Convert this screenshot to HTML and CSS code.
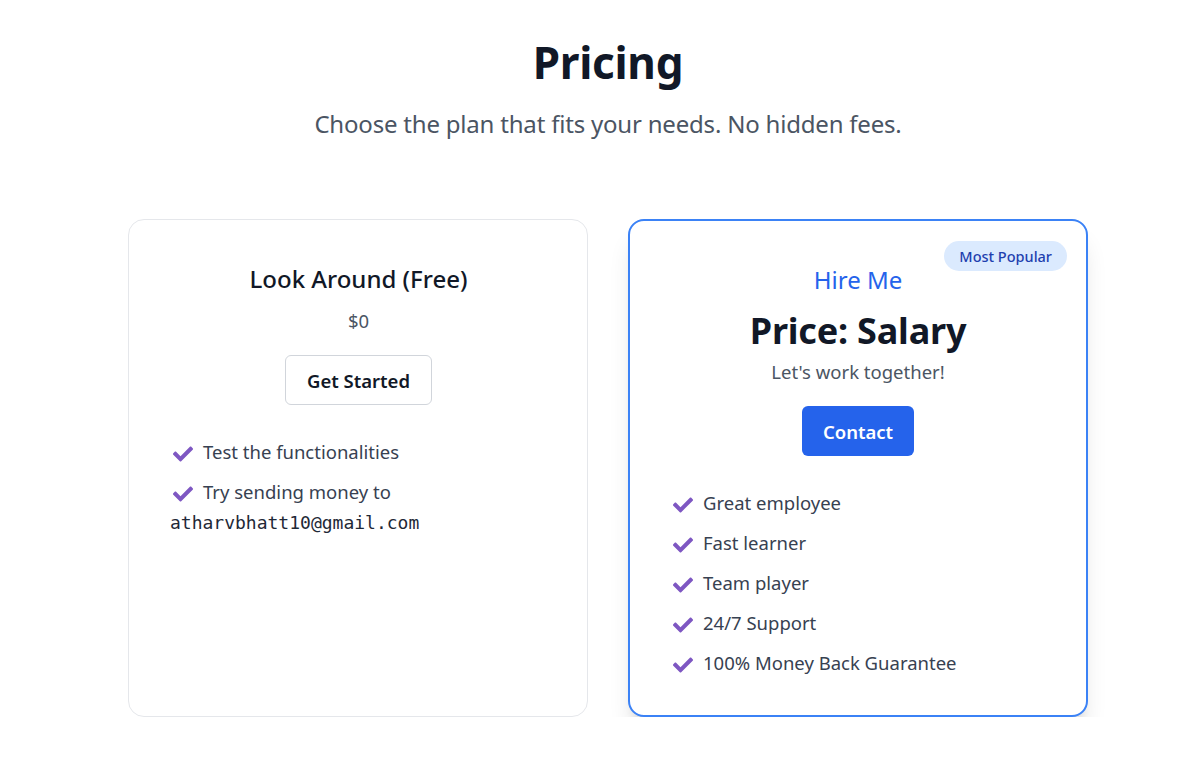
FILE: index.html
```html
<!DOCTYPE html>
<html lang="en">
<head>
<meta charset="utf-8">
<title>Pricing</title>
<link rel="stylesheet" href="styles.css">
</head>
<body>
<main class="page">
  <header class="intro">
    <h1 class="title">Pricing</h1>
    <p class="subtitle">Choose the plan that fits your needs. No hidden fees.</p>
  </header>
  <section class="plans">
    <article class="card">
      <h2 class="plan-name">Look Around (Free)</h2>
      <p class="plan-price">$0</p>
      <button class="btn btn-outline">Get Started</button>
      <ul class="features">
        <li><svg class="check" viewBox="0 0 512 400"><path d="M173.9 383.4l-166.4-166.4c-10-10-10-26.2 0-36.2l36.2-36.2c10-10 26.2-10 36.2 0L192 256.7 432.1 16.6c10-10 26.2-10 36.2 0l36.2 36.2c10 10 10 26.2 0 36.2l-294.4 294.4c-10 10-26.2 10-36.2 0z"/></svg>Test the functionalities</li>
        <li><svg class="check" viewBox="0 0 512 400"><path d="M173.9 383.4l-166.4-166.4c-10-10-10-26.2 0-36.2l36.2-36.2c10-10 26.2-10 36.2 0L192 256.7 432.1 16.6c10-10 26.2-10 36.2 0l36.2 36.2c10 10 10 26.2 0 36.2l-294.4 294.4c-10 10-26.2 10-36.2 0z"/></svg>Try sending money to <code class="email">atharvbhatt10@gmail.com</code></li>
      </ul>
    </article>
    <article class="card card-featured">
      <span class="badge">Most Popular</span>
      <h2 class="plan-name plan-name-blue">Hire Me</h2>
      <p class="plan-big">Price: Salary</p>
      <p class="plan-note">Let's work together!</p>
      <button class="btn btn-primary">Contact</button>
      <ul class="features">
        <li><svg class="check" viewBox="0 0 512 400"><path d="M173.9 383.4l-166.4-166.4c-10-10-10-26.2 0-36.2l36.2-36.2c10-10 26.2-10 36.2 0L192 256.7 432.1 16.6c10-10 26.2-10 36.2 0l36.2 36.2c10 10 10 26.2 0 36.2l-294.4 294.4c-10 10-26.2 10-36.2 0z"/></svg>Great employee</li>
        <li><svg class="check" viewBox="0 0 512 400"><path d="M173.9 383.4l-166.4-166.4c-10-10-10-26.2 0-36.2l36.2-36.2c10-10 26.2-10 36.2 0L192 256.7 432.1 16.6c10-10 26.2-10 36.2 0l36.2 36.2c10 10 10 26.2 0 36.2l-294.4 294.4c-10 10-26.2 10-36.2 0z"/></svg>Fast learner</li>
        <li><svg class="check" viewBox="0 0 512 400"><path d="M173.9 383.4l-166.4-166.4c-10-10-10-26.2 0-36.2l36.2-36.2c10-10 26.2-10 36.2 0L192 256.7 432.1 16.6c10-10 26.2-10 36.2 0l36.2 36.2c10 10 10 26.2 0 36.2l-294.4 294.4c-10 10-26.2 10-36.2 0z"/></svg>Team player</li>
        <li><svg class="check" viewBox="0 0 512 400"><path d="M173.9 383.4l-166.4-166.4c-10-10-10-26.2 0-36.2l36.2-36.2c10-10 26.2-10 36.2 0L192 256.7 432.1 16.6c10-10 26.2-10 36.2 0l36.2 36.2c10 10 10 26.2 0 36.2l-294.4 294.4c-10 10-26.2 10-36.2 0z"/></svg>24/7 Support</li>
        <li><svg class="check" viewBox="0 0 512 400"><path d="M173.9 383.4l-166.4-166.4c-10-10-10-26.2 0-36.2l36.2-36.2c10-10 26.2-10 36.2 0L192 256.7 432.1 16.6c10-10 26.2-10 36.2 0l36.2 36.2c10 10 10 26.2 0 36.2l-294.4 294.4c-10 10-26.2 10-36.2 0z"/></svg>100% Money Back Guarantee</li>
      </ul>
    </article>
  </section>
</main>
</body>
</html>
```

FILE: styles.css
```css
* { box-sizing: border-box; }

html, body {
  margin: 0;
  padding: 0;
  background: #ffffff;
}

body {
  font-family: "Noto Sans", "Open Sans", sans-serif;
  color: #111827;
}

.page {
  padding: 34px 0 0 24px;
  display: flex;
  flex-direction: column;
  align-items: center;
}

.intro {
  text-align: center;
}

.title {
  margin: 0;
  font-size: 44px;
  line-height: 56px;
  font-weight: 700;
  color: #111827;
  letter-spacing: -0.3px;
}

.subtitle {
  margin: 18px 0 0;
  font-size: 24px;
  line-height: 32px;
  color: #4b5563;
  letter-spacing: -0.2px;
}

.plans {
  margin-top: 79px;
  display: grid;
  grid-template-columns: 460px 460px;
  gap: 40px;
}

.card {
  position: relative;
  height: 498px;
  border: 1px solid #e5e7eb;
  border-radius: 16px;
  background: #fff;
  padding: 43px 40px 16px 41px;
  display: flex;
  flex-direction: column;
  align-items: center;
}

.card > * { flex-shrink: 0; }

.card-featured {
  border: 2px solid #3b82f6;
  padding: 43px 40px 16px 40px;
  box-shadow: 0 20px 25px -5px rgba(0,0,0,0.12), 0 8px 10px -6px rgba(0,0,0,0.12);
}

.badge {
  position: absolute;
  top: 20px;
  right: 19px;
  height: 30px;
  padding: 0 15px;
  border-radius: 999px;
  background: #dbeafe;
  color: #1e40af;
  font-size: 14.5px;
  line-height: 30px;
  font-weight: 500;
}

.plan-name {
  margin: 0;
  font-size: 24px;
  line-height: 32px;
  font-weight: 500;
  color: #111827;
}

.plan-name-blue {
  font-weight: 400;
  color: #2563eb;
}

.plan-price {
  margin: 14px 0 0;
  font-size: 18.5px;
  line-height: 24px;
  color: #4b5563;
}

.plan-big {
  margin: 12px 0 0;
  font-size: 36px;
  line-height: 46px;
  font-weight: 700;
  color: #111827;
  letter-spacing: -0.2px;
}

.plan-note {
  margin: 6px 0 0;
  font-size: 18.5px;
  line-height: 24px;
  color: #4b5563;
}

.btn {
  margin-top: 22px;
  height: 50px;
  padding: 0 21px;
  border-radius: 6px;
  font-family: inherit;
  font-size: 18.5px;
  font-weight: 600;
  cursor: pointer;
}

.btn-outline {
  background: #fff;
  border: 1px solid #d1d5db;
  color: #111827;
}

.btn-primary {
  background: #2563eb;
  border: none;
  color: #fff;
}

.features {
  list-style: none;
  margin: 32px 0 0;
  padding: 0 0 0 3px;
  align-self: stretch;
  display: flex;
  flex-direction: column;
  gap: 10px;
}

.features li {
  font-size: 18.5px;
  line-height: 30px;
  color: #374151;
}

.check {
  width: 20px;
  height: 16px;
  fill: #7e57c2;
  margin-right: 10px;
  vertical-align: -3px;
}

.email {
  font-family: "DejaVu Sans Mono", monospace;
  font-size: 18px;
  color: #1f2937;
  margin-left: -3px;
}
```
